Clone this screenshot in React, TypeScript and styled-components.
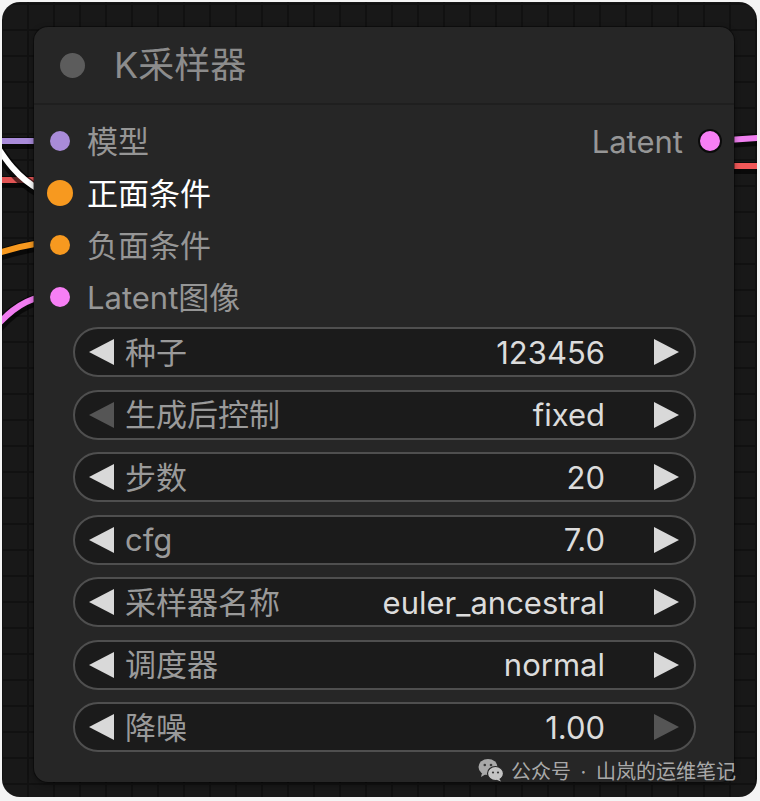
import React from "react";
import styled, { createGlobalStyle } from "styled-components";

const GlobalStyle = createGlobalStyle`
  html, body { margin: 0; padding: 0; background: #f4f4f4; }
  body {
    width: 760px; height: 801px; overflow: hidden;
    font-family: Inter, "Noto Sans CJK SC", sans-serif;
  }
  * { box-sizing: border-box; }
`;

const Frame = styled.div`
  position: relative;
  width: 760px;
  height: 801px;
  padding: 2px 3px 4px 2px;
  background: #f4f4f4;
`;

const Canvas = styled.div`
  position: relative;
  height: 100%;
  border-radius: 18px;
  overflow: hidden;
  background-color: #181818;
  background-image: linear-gradient(to right, #111111 2px, transparent 2px),
    linear-gradient(to bottom, #111111 2px, transparent 2px);
  background-size: 26px 26px;
  background-position: 25px 1px;
  padding: 25px 0 0 32px;
`;

const Wires = styled.svg`
  position: absolute;
  left: -2px;
  top: -2px;
  width: 760px;
  height: 801px;
  pointer-events: none;
`;

const Node = styled.div`
  position: relative;
  z-index: 1;
  width: 700px;
  height: 755px;
  background: #262626;
  border-radius: 14px;
  box-shadow: 0 0 0 1px rgba(0, 0, 0, 0.35), 0 2px 6px rgba(0, 0, 0, 0.4);
  display: flex;
  flex-direction: column;
`;

const TitleBar = styled.div`
  height: 78px;
  display: flex;
  align-items: center;
  gap: 29px;
  padding-left: 26px;
  border-bottom: 2px solid #1f1f1f;
`;

const TitleDot = styled.span`
  width: 25px;
  height: 25px;
  border-radius: 50%;
  background: #5c5c5c;
`;

const Title = styled.span`
  font-size: 36px;
  color: #8c8c8c;
  line-height: 1;
`;

const Slots = styled.div`
  display: grid;
  grid-template-columns: 1fr auto;
  grid-auto-rows: 52px;
  padding-top: 10px;
`;

const InRow = styled.div`
  grid-column: 1;
  display: flex;
  align-items: center;
  padding-left: 13px;
  gap: 14px;
`;

const OutRow = styled.div`
  grid-column: 2;
  grid-row: 1;
  display: flex;
  align-items: center;
  gap: 14px;
  padding-right: 23px;
  margin-right: -12px;
`;

const DotSlot = styled.span`
  width: 26px;
  height: 26px;
  display: flex;
  align-items: center;
  justify-content: center;
`;

const Dot = styled.span<{ $color: string; $size: number; $ring?: boolean }>`
  width: ${(p) => p.$size}px;
  height: ${(p) => p.$size}px;
  border-radius: 50%;
  background: ${(p) => p.$color};
  border: ${(p) => (p.$ring ? "2.5px solid #0b0b0b" : "none")};
`;

const SlotLabel = styled.span<{ $active?: boolean }>`
  font-size: 31px;
  line-height: 1;
  color: ${(p) => (p.$active ? "#ffffff" : "#969696")};
`;

const Widgets = styled.div`
  display: flex;
  flex-direction: column;
  gap: 12.5px;
  padding: 4px 38px 0 39px;
`;

const WidgetBox = styled.div`
  height: 50px;
  border: 2px solid #4f4f4f;
  border-radius: 25px;
  background: #1b1b1b;
  display: flex;
  align-items: center;
  padding: 0 15px 0 14px;
`;

const WLabel = styled.span`
  font-size: 31px;
  line-height: 1;
  color: #9a9a9a;
  margin-left: 11px;
  flex: 1;
`;

const WValue = styled.span`
  font-size: 31px;
  line-height: 1;
  color: #dcdcdc;
  margin-right: 49px;
`;

const Arrow = styled.svg<{ $dim?: boolean }>`
  width: 25px;
  height: 26px;
  flex: none;
  fill: ${(p) => (p.$dim ? "#555555" : "#d9d9d9")};
`;

const Watermark = styled.div`
  position: absolute;
  z-index: 2;
  right: 24px;
  top: 757px;
  height: 26px;
  display: flex;
  align-items: center;
  gap: 7px;
  font-size: 20px;
  color: rgba(205, 205, 205, 0.8);
  font-family: "Noto Sans CJK SC", sans-serif;
`;

const Sep = styled.span`
  font-family: Inter, sans-serif;
  white-space: pre;
  margin: 0 4px;
`;

const WeChatIcon = () => (
  <svg width="26" height="24" viewBox="0 0 26 24">
    <ellipse cx="10" cy="9" rx="9.5" ry="8" fill="#a9a9a9" />
    <path d="M4 15 L3 19 L8 16 Z" fill="#a9a9a9" />
    <circle cx="6.8" cy="7" r="1.3" fill="#3a3a3a" />
    <circle cx="13" cy="7" r="1.3" fill="#3a3a3a" />
    <ellipse cx="17.5" cy="15.5" rx="8" ry="7" fill="#c4c4c4" stroke="#262626" strokeWidth="1.2" />
    <path d="M21 20.5 L23 23.5 L18 21.5 Z" fill="#c4c4c4" />
    <circle cx="15" cy="14.5" r="1.1" fill="#3a3a3a" />
    <circle cx="20" cy="14.5" r="1.1" fill="#3a3a3a" />
  </svg>
);

const LeftArrow = ({ dim }: { dim?: boolean }) => (
  <Arrow $dim={dim} viewBox="0 0 25 26">
    <polygon points="25,0 25,26 0,13" />
  </Arrow>
);

const RightArrow = ({ dim }: { dim?: boolean }) => (
  <Arrow $dim={dim} viewBox="0 0 25 26">
    <polygon points="0,0 0,26 25,13" />
  </Arrow>
);

type W = { label: string; value: string; leftDim?: boolean; rightDim?: boolean };

const widgets: W[] = [
  { label: "种子", value: "123456" },
  { label: "生成后控制", value: "fixed", leftDim: true },
  { label: "步数", value: "20" },
  { label: "cfg", value: "7.0" },
  { label: "采样器名称", value: "euler_ancestral" },
  { label: "调度器", value: "normal" },
  { label: "降噪", value: "1.00", rightDim: true },
];

const inputs = [
  { label: "模型", color: "#a98bd9", size: 20 },
  { label: "正面条件", color: "#f7991f", size: 26, active: true },
  { label: "负面条件", color: "#f7991f", size: 20 },
  { label: "Latent图像", color: "#f77ff5", size: 20 },
];

const wirePaths = [
  { d: "M -10 141 L 40 141", c: "#a98bd9" },
  { d: "M -10 180 L 40 180", c: "#e25555" },
  { d: "M -8 138 C 5 160, 18 178, 40 190", c: "#ffffff" },
  { d: "M -10 256 Q 15 247 40 243", c: "#f7991f" },
  { d: "M -10 334 C 5 315, 20 302, 40 297", c: "#f07cf0" },
  { d: "M 728 140 L 770 137", c: "#f080f0" },
  { d: "M 728 166 L 770 166", c: "#f25858" },
];

export default function App() {
  return (
    <>
      <GlobalStyle />
      <Frame>
        <Canvas>
          <Wires viewBox="0 0 760 801">
            {wirePaths.map((w, i) => (
              <g key={i}>
                <path d={w.d} stroke="rgba(0,0,0,0.6)" strokeWidth={12} fill="none" transform="translate(0,2)" />
                <path d={w.d} stroke={w.c} strokeWidth={6} fill="none" />
              </g>
            ))}
          </Wires>
          <Node>
            <TitleBar>
              <TitleDot />
              <Title>K采样器</Title>
            </TitleBar>
            <Slots>
              {inputs.map((s) => (
                <InRow key={s.label}>
                  <DotSlot>
                    <Dot $color={s.color} $size={s.size} />
                  </DotSlot>
                  <SlotLabel $active={s.active}>{s.label}</SlotLabel>
                </InRow>
              ))}
              <OutRow>
                <SlotLabel>Latent</SlotLabel>
                <DotSlot>
                  <Dot $color="#f77ff5" $size={24} $ring />
                </DotSlot>
              </OutRow>
            </Slots>
            <Widgets>
              {widgets.map((w) => (
                <WidgetBox key={w.label}>
                  <LeftArrow dim={w.leftDim} />
                  <WLabel>{w.label}</WLabel>
                  <WValue>{w.value}</WValue>
                  <RightArrow dim={w.rightDim} />
                </WidgetBox>
              ))}
            </Widgets>
          </Node>
        </Canvas>
        <Watermark>
          <WeChatIcon />
          <span>
            公众号<Sep> · </Sep>山岚的运维笔记
          </span>
        </Watermark>
      </Frame>
    </>
  );
}
